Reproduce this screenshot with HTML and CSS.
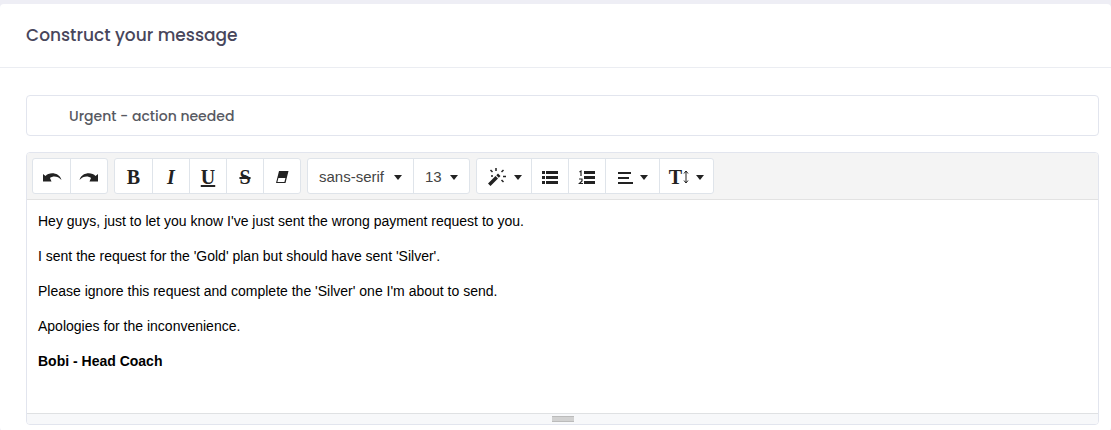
FILE: index.html
```html
<!DOCTYPE html>
<html lang="en">
<head>
    <meta charset="UTF-8">
    <meta name="viewport" content="width=device-width, initial-scale=1.0">
    <title>Construct your message</title>
    <link rel="stylesheet" href="styles.css">
</head>
<body>
    <main class="card">
        <header class="card-header">
            <h1>Construct your message</h1>
        </header>
        <form class="card-body">
            <input class="subject" type="text" name="subject" aria-label="Subject" value="Urgent - action needed">
            <div class="editor">
                <div class="toolbar" role="toolbar" aria-label="Formatting">
                    <div class="group">
                        <button type="button" aria-label="Undo">
                            <svg width="20" height="14" viewBox="0 0 20 14"><path d="M1 4l2.500 2C7 2 17 2 19.500 10C16 6 11 5.500 8 8l1.500 3.500H1z"/></svg>
                        </button>
                        <button type="button" aria-label="Redo">
                            <svg width="20" height="14" viewBox="0 0 20 14"><path d="M19 4l-2.500 2C13 2 3 2 .5 10C4 6 9 5.500 12 8l-1.500 3.500H19z"/></svg>
                        </button>
                    </div>
                    <div class="group">
                        <button type="button" class="letter" aria-label="Bold">B</button>
                        <button type="button" class="letter italic" aria-label="Italic">I</button>
                        <button type="button" class="letter underline" aria-label="Underline">U</button>
                        <button type="button" class="letter strike" aria-label="Strikethrough">S</button>
                        <button type="button" aria-label="Remove formatting">
                            <svg width="14" height="14" viewBox="0 0 14 14"><path fill-rule="evenodd" d="M4 1h9.500l-3 12H1zM3.400 8l-1 4h7l1-4z"/></svg>
                        </button>
                    </div>
                    <div class="group">
                        <select class="font-family" aria-label="Font family">
                            <option>sans-serif</option>
                            <option>serif</option>
                            <option>monospace</option>
                        </select>
                        <select class="font-size" aria-label="Font size">
                            <option>13</option>
                            <option>14</option>
                            <option>18</option>
                        </select>
                    </div>
                    <div class="group">
                        <button type="button" class="menu" aria-label="Style">
                            <svg width="20" height="20" viewBox="0 0 20 20"><path d="M1 16.500L8.500 9l2.500 2.500L3.500 19zM9.300 8.200L11 6.500 13.500 9l-1.700 1.700z"/><path d="M9 1v3M3.500 3l2 2M16.500 3l-2 2M16 9.500h3M14.500 13l2 2M4 9h2" fill="none" stroke="#222" stroke-width="1.500"/></svg>
                            <span class="caret"></span>
                        </button>
                        <button type="button" aria-label="Bulleted list">
                            <svg width="18" height="16" viewBox="0 0 18 16"><path d="M1 2h3v3H1zM1 7h3v3H1zM1 12h3v3H1zM5 2h12v3H5zM5 7h12v3H5zM5 12h12v3H5z"/></svg>
                        </button>
                        <button type="button" aria-label="Numbered list">
                            <svg width="18" height="16" viewBox="0 0 18 16"><path d="M6 2h11v3H6zM6 7h11v3H6zM6 12h11v3H6z"/><path d="M1.500 3L3 2v5M1 10h3v2L1.500 14.500H5" fill="none" stroke="#222" stroke-width="1.200"/></svg>
                        </button>
                        <button type="button" class="menu" aria-label="Alignment">
                            <svg width="16" height="14" viewBox="0 0 16 14"><path d="M1 2h13v2H1zM1 7h11v2H1zM1 12h15v2H1z"/></svg>
                            <span class="caret"></span>
                        </button>
                        <button type="button" class="menu letter" aria-label="Line height">
                            <span class="line-height">T<svg width="6" height="14" viewBox="0 0 6 14"><path d="M3 1v12M1 3.500L3 1l2 2.500M1 10.500L3 13l2-2.500" fill="none" stroke="#222"/></svg></span>
                            <span class="caret"></span>
                        </button>
                    </div>
                </div>
                <div class="message" contenteditable="true" role="textbox" aria-multiline="true" aria-label="Message" spellcheck="false">
                    <p>Hey guys, just to let you know I've just sent the wrong payment request to you.</p>
                    <p>I sent the request for the 'Gold' plan but should have sent 'Silver'.</p>
                    <p>Please ignore this request and complete the 'Silver' one I'm about to send.</p>
                    <p>Apologies for the inconvenience.</p>
                    <p><b>Bobi - Head Coach</b></p>
                </div>
                <div class="resize-bar"><span class="grip"></span></div>
            </div>
        </form>
    </main>
</body>
</html>
```
FILE: styles.css
```css
:root {
    --border: #e2e5ee;
    --ink: #222;
}
* { box-sizing: border-box; }
body {
    margin: 0;
    padding-top: 4px;
    background: #eeeef5;
    font-family: Poppins, Inter, sans-serif;
}
.card {
    background: #fff;
    border-radius: 4px;
}
.card-header {
    padding: 20px 26px;
    border-bottom: 1px solid #ebedf2;
}
h1 {
    margin: 0;
    font-size: 17px;
    line-height: 23px;
    font-weight: 500;
    color: #48465b;
}
.card-body { padding: 27px 12px 6px 26px; }
.subject {
    display: block;
    width: 100%;
    height: 41px;
    padding: 1px 42px 0;
    border: 1px solid var(--border);
    border-radius: 4px;
    font: 500 14px Poppins, Inter, sans-serif;
    color: #575962;
}
.editor {
    margin-top: 16px;
    border: 1px solid var(--border);
    border-radius: 4px;
    overflow: hidden;
}
.toolbar {
    display: flex;
    flex-wrap: wrap;
    gap: 6px;
    padding: 5px;
    background: #f4f4f4;
    border-bottom: 1px solid #e2e2e2;
}
.group {
    display: flex;
    background: #fff;
    border: 1px solid #dfe4ea;
    border-radius: 3px;
}
.group button,
.group select {
    height: 34px;
    min-width: 37px;
    padding: 0;
    border: 0;
    border-radius: 0;
    background: none;
    color: var(--ink);
}
.group button {
    display: flex;
    align-items: center;
    justify-content: center;
    gap: 7px;
    padding-top: 2px;
}
.group > * + * { border-left: 1px solid #dfe4ea !important; }
.group > button.menu { min-width: 54px; }
svg { fill: var(--ink); }
.group .letter { font: bold 20px "Liberation Serif", serif; }
.group .italic { font-style: italic; }
.group .underline { text-decoration: underline; }
.group .strike { text-decoration: line-through 2px; }
.line-height {
    display: flex;
    align-items: center;
    gap: 1px;
}
.caret {
    border: 4px solid transparent;
    border-top: 5px solid var(--ink);
    border-bottom: 0;
}
.group select {
    appearance: none;
    padding-left: 11px;
    font: 15px "Liberation Sans", Arial, sans-serif;
    color: #444;
    background: url("data:image/svg+xml,%3Csvg xmlns='http://www.w3.org/2000/svg' width='8' height='5'%3E%3Cpath d='M0 0h8L4 5z' fill='%23222'/%3E%3C/svg%3E") no-repeat right 11px top 16px;
}
.group .font-family { width: 105px; }
.group .font-size { width: 56px; }
.message {
    min-height: 213px;
    padding: 11px;
    outline: 0;
    font: 14px/21px "Liberation Sans", Arial, sans-serif;
    color: #000;
}
.message p { margin: 0 0 14px; }
.resize-bar {
    display: flex;
    justify-content: center;
    padding: 2px 0;
    border-top: 1px solid #dfe1e3;
    background: #f7f8fa;
    cursor: ns-resize;
}
.grip {
    width: 22px;
    height: 6px;
    border-top: 1px solid #bbb;
    border-bottom: 1px solid #bbb;
    background: #d2d2d2;
}
```
